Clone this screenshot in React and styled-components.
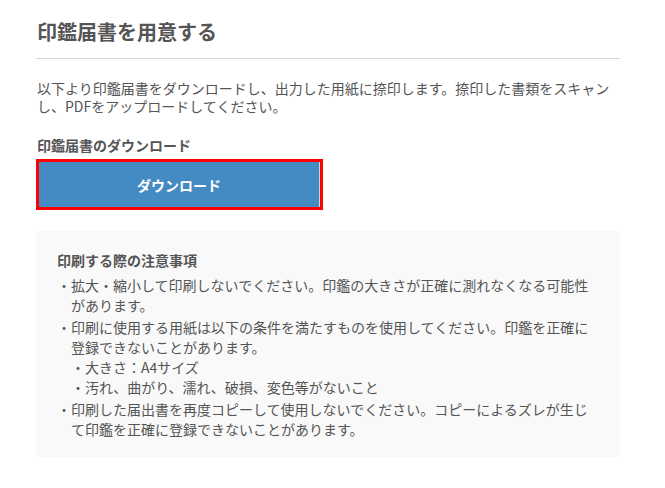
import React from "react";
import styled, { createGlobalStyle } from "styled-components";

const GlobalStyle = createGlobalStyle`
    body {
        margin: 0;
        background: #fff;
        font-family: "Noto Sans CJK JP", "Noto Sans", sans-serif;
        color: #555;
    }
`;

const Page = styled.div`
    width: 584px;
    padding: 18px 0 0 36px;
`;

const Title = styled.h2`
    margin: 0;
    font-size: 20px;
    line-height: 28px;
    font-weight: 700;
    color: #555;
    padding: 0 0 12px 1px;
    border-bottom: 1px solid #d6d6d6;
`;

const Lead = styled.p`
    margin: 20px 0 0 1px;
    font-size: 14px;
    line-height: 18px;
    color: #555;
`;

const SubHeading = styled.h3`
    margin: 21px 0 0 1px;
    font-size: 14px;
    line-height: 18px;
    font-weight: 700;
    color: #555;
`;

const ButtonFrame = styled.div`
    display: flex;
    margin-top: 5px;
    width: 287px;
    height: 51px;
    box-sizing: border-box;
    border: 3px solid #f00;
`;

const DownloadButton = styled.button`
    flex: 1;
    display: flex;
    align-items: center;
    justify-content: center;
    padding: 0;
    background: #448bc4;
    border: 0;
    border-right: 1px solid #c4d7e6;
    color: #fff;
    font-family: inherit;
    font-size: 14px;
    font-weight: 700;
    cursor: pointer;
`;

const NoteBox = styled.section`
    margin-top: 21px;
    background: #f9f9f9;
    padding: 19px 20px 18px 21px;
`;

const NoteTitle = styled.h4`
    margin: 0 0 5px;
    font-size: 14px;
    line-height: 20px;
    font-weight: 700;
    color: #555;
`;

const List = styled.ul`
    margin: 0;
    padding: 0;
    list-style: none;
    font-size: 14px;
    line-height: 20px;
    color: #555;
    text-indent: 0;
`;

const Item = styled.li`
    padding-left: 1em;
    text-indent: -1em;
    margin-top: ${(p) => (p.$tight ? "0" : "2px")};

    &:first-child {
        margin-top: 0;
    }

    &::before {
        content: "・";
    }
`;

const App = () => (
    <Page>
        <GlobalStyle />
        <Title>印鑑届書を用意する</Title>
        <Lead>
            以下より印鑑届書をダウンロードし、出力した用紙に捺印します。捺印した書類をスキャンし、PDFをアップロードしてください。
        </Lead>
        <SubHeading>印鑑届書のダウンロード</SubHeading>
        <ButtonFrame>
            <DownloadButton type="button">ダウンロード</DownloadButton>
        </ButtonFrame>
        <NoteBox>
            <NoteTitle>印刷する際の注意事項</NoteTitle>
            <List>
                <Item>
                    拡大・縮小して印刷しないでください。印鑑の大きさが正確に測れなくなる可能性があります。
                </Item>
                <Item>
                    印刷に使用する用紙は以下の条件を満たすものを使用してください。印鑑を正確に登録できないことがあります。
                    <List>
                        <Item $tight>大きさ：A4サイズ</Item>
                        <Item $tight>汚れ、曲がり、濡れ、破損、変色等がないこと</Item>
                    </List>
                </Item>
                <Item>
                    印刷した届出書を再度コピーして使用しないでください。コピーによるズレが生じて印鑑を正確に登録できないことがあります。
                </Item>
            </List>
        </NoteBox>
    </Page>
);

export default App;
